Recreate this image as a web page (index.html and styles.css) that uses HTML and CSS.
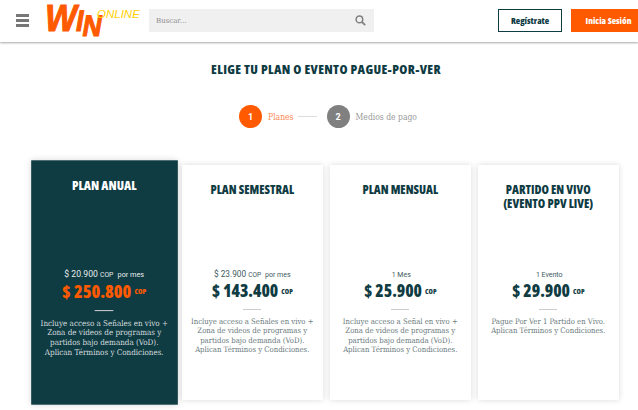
FILE: index.html
```html
<!DOCTYPE html>
<html lang="en">
<head>
    <meta name="viewport" content="width=device-width, initial-scale=1">
    <title>Win Online</title>
    <link rel="stylesheet" href="styles.css">
</head>

<body>

    <header class="topbar">
        <div class="burger"><span></span><span></span><span></span></div>

        <svg class="logo" width="94" height="36" viewBox="0 0 94 36">
            <text class="logo-win" transform="translate(-3 27) skewX(-10) scale(1.2 1.35)">W<tspan class="logo-small">I</tspan><tspan class="logo-small" dy="3.7">N</tspan></text>
            <text class="logo-online" x="51" y="14">ONLINE</text>
        </svg>

        <div class="search">
            <span>Buscar...</span>
            <svg width="11" height="11" viewBox="0 0 13 13">
                <circle cx="5.2" cy="5.2" r="3.9" fill="none" stroke="#808080" stroke-width="1.8"/>
                <line x1="8.2" y1="8.2" x2="12" y2="12" stroke="#808080" stroke-width="2.2"/>
            </svg>
        </div>

        <a class="btn btn-outline">Regístrate</a>
        <a class="btn btn-orange">Inicia Sesión</a>
    </header>

    <h1 class="page-title">ELIGE TU PLAN O EVENTO PAGUE-POR-VER</h1>

    <div class="steps">
        <span class="step-num active">1</span>
        <span class="step-label active">Planes</span>
        <span class="step-line"></span>
        <span class="step-num">2</span>
        <span class="step-label">Medios de pago</span>
    </div>

    <div class="plans">
        <div class="plan featured">
            <h2>PLAN ANUAL</h2>
            <p class="per-month">$ 20.900 <small>COP</small> <b>por mes</b></p>
            <p class="price">$ 250.800 <small>COP</small></p>
            <hr>
            <p class="desc">Incluye acceso a Señales en vivo + Zona de videos de programas y partidos bajo demanda (VoD). Aplican Términos y Condiciones.</p>
        </div>
        <div class="plan">
            <h2>PLAN SEMESTRAL</h2>
            <p class="per-month">$ 23.900 <small>COP</small> <b>por mes</b></p>
            <p class="price">$ 143.400 <small>COP</small></p>
            <hr>
            <p class="desc">Incluye acceso a Señales en vivo + Zona de videos de programas y partidos bajo demanda (VoD). Aplican Términos y Condiciones.</p>
        </div>
        <div class="plan">
            <h2>PLAN MENSUAL</h2>
            <p class="per-month"><b>1 Mes</b></p>
            <p class="price">$ 25.900 <small>COP</small></p>
            <hr>
            <p class="desc">Incluye acceso a Señal en vivo + Zona de videos de programas y partidos bajo demanda (VoD). Aplican Términos y Condiciones.</p>
        </div>
        <div class="plan">
            <h2>PARTIDO EN VIVO<br>(EVENTO PPV LIVE)</h2>
            <p class="per-month"><b>1 Evento</b></p>
            <p class="price">$ 29.900 <small>COP</small></p>
            <hr>
            <p class="desc">Pague Por Ver 1 Partido en Vivo. Aplican Términos y Condiciones.</p>
        </div>
    </div>

</body>
</html>
```

FILE: styles.css
```css
html {
    height: 410px;
    overflow: hidden;
}

body {
    margin: 0;
    width: 638px;
    height: 410px;
    overflow: hidden;
    background-color: white;
    font-family: 'Roboto', sans-serif;
}

.topbar {
    height: 42px;
    box-sizing: border-box;
    padding: 9px 0 0 16px;
    display: flex;
    align-items: flex-start;
    background-color: white;
    box-shadow: 0 1px 2px rgba(0, 0, 0, 0.35);
}

.burger {
    width: 13px;
    margin: 5px 0 0 0;
    display: flex;
    flex-direction: column;
    gap: 2.5px;
}

.burger span {
    height: 2.5px;
    background-color: #777;
}

.logo {
    margin: -5px 0 0 17px;
    flex: none;
    overflow: visible;
}

.logo-win {
    font-family: 'Liberation Sans', sans-serif;
    font-weight: bold;
    font-size: 28px;
    fill: #ff5a00;
    stroke: #ff5a00;
    stroke-width: 0.8px;
}

.logo-small {
    font-size: 22px;
}

.logo-online {
    font-family: 'Liberation Sans', sans-serif;
    font-style: italic;
    font-size: 11.5px;
    fill: #ffd000;
}

.search {
    width: 225px;
    height: 23px;
    margin-left: 9px;
    padding: 0 8px 0 7px;
    box-sizing: border-box;
    display: flex;
    align-items: center;
    justify-content: space-between;
    background-color: #f0f0f0;
    font-family: 'DejaVu Serif', serif;
    font-size: 7px;
    color: #8a8a8a;
}

.btn {
    height: 23px;
    box-sizing: border-box;
    display: flex;
    align-items: center;
    justify-content: center;
    font-family: 'Open Sans', sans-serif;
    font-stretch: 75%;
    font-weight: 800;
    font-size: 9px;
}

.btn-outline {
    width: 64px;
    margin-left: 124px;
    border: 1px solid #0f3b43;
    color: #0f3b43;
}

.btn-orange {
    width: 67px;
    margin-left: 9px;
    padding-left: 8px;
    background-color: #ff5a00;
    color: white;
}

.page-title {
    margin: 20px 0 0 0;
    padding-left: 14px;
    text-align: center;
    font-family: 'Open Sans', sans-serif;
    font-stretch: 75%;
    font-weight: 800;
    font-size: 13px;
    line-height: 15px;
    letter-spacing: 0.35px;
    color: #0f3b43;
}

.steps {
    margin: 28px 0 0 239px;
    display: flex;
    align-items: center;
    font-family: 'DejaVu Serif Condensed', 'DejaVu Serif', serif;
    font-size: 8.5px;
    color: #999;
}

.step-num {
    width: 23px;
    height: 23px;
    border-radius: 50%;
    display: flex;
    align-items: center;
    justify-content: center;
    background-color: #808080;
    color: white;
    font-family: 'Roboto', sans-serif;
    font-weight: bold;
    font-size: 9px;
}

.step-num.active {
    background-color: #ff5a00;
}

.step-label {
    margin-left: 6px;
}

.step-label.active {
    color: #ff8a55;
}

.step-line {
    width: 19px;
    height: 1px;
    margin: 0 10px 0 4px;
    background-color: #ddd;
}

.plans {
    margin: 37px 0 0 34px;
    display: flex;
    gap: 7.5px;
}

.plan {
    width: 140.5px;
    height: 235px;
    box-sizing: border-box;
    padding: 18px 5px 0;
    text-align: center;
    background-color: white;
    box-shadow: 0 0 6px rgba(0, 0, 0, 0.15);
    color: #0f3b43;
}

.plan h2 {
    height: 86px;
    margin: 0;
    font-family: 'Open Sans', sans-serif;
    font-stretch: 75%;
    font-weight: 800;
    font-size: 12px;
    line-height: 13.5px;
}

.per-month {
    margin: 0;
    font-family: 'Roboto', sans-serif;
    font-size: 8.3px;
    line-height: 10px;
    color: #3c5a60;
}

.per-month small {
    font-size: 6.5px;
}

.per-month b {
    font-weight: 400;
    font-size: 7px;
    margin-left: 2px;
}

.price {
    margin: 0;
    font-family: 'Open Sans', sans-serif;
    font-stretch: 75%;
    font-weight: 800;
    font-size: 17px;
    line-height: 21px;
}

.price small {
    font-size: 7px;
    vertical-align: 3px;
}

.plan hr {
    width: 18px;
    height: 1px;
    margin: 7px auto 7px;
    border: none;
    background-color: #ccc;
}

.desc {
    margin: 0;
    font-family: 'DejaVu Serif Condensed', 'DejaVu Serif', serif;
    font-size: 7.7px;
    line-height: 9.3px;
    color: #6b7b7e;
}

.plan.featured {
    transform: scale(1.04);
    background-color: #0f3b43;
    color: white;
}

.featured .per-month {
    color: #e6ecec;
}

.featured .price {
    color: #ff5a00;
}

.featured .desc {
    color: #d5dddf;
}
```
